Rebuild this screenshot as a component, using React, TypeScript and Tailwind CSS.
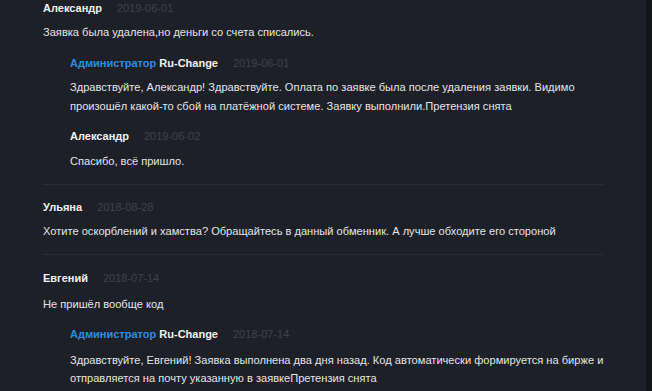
import React from "react";

type C = { name: string; admin?: boolean; date: string };

function Head({ c }: { c: C }) {
  return (
    <div className="flex items-center h-[16px] text-[11px] leading-[16px]">
      {c.admin ? (
        <span className="font-bold">
          <span className="text-[#2a8ee0]">Администратор</span>{" "}
          <span className="text-[#f2f2f2]">Ru-Change</span>
        </span>
      ) : (
        <span className="font-bold text-[#f2f2f2]">{c.name}</span>
      )}
      <span className="ml-[15px] text-[#3f424d]">{c.date}</span>
    </div>
  );
}

function Body({ lines, tight }: { lines: string[]; tight?: boolean }) {
  return (
    <div
      className={
        tight
          ? "text-[11.1px] leading-[18px] text-[#e4e4e6] whitespace-nowrap"
          : "text-[11.1px] leading-[19px] text-[#e4e4e6] whitespace-nowrap"
      }
    >
      {lines.map((l, i) => (
        <div key={i}>{l}</div>
      ))}
    </div>
  );
}

export default function App() {
  return (
    <div
      className="flex w-[652px] h-[391px] overflow-hidden bg-[#1e2028]"
      style={{ fontFamily: '"Liberation Sans", Arial, sans-serif' }}
    >
      <div className="w-[646px] pl-[43px] pr-[42px]">
        {/* Thread 1 */}
        <div className="pb-[13px] border-b border-[#2a2c35]">
          <Head c={{ name: "Александр", date: "2019-06-01" }} />
          <div className="mt-[7px]">
            <Body lines={["Заявка была удалена,но деньги со счета списались."]} />
          </div>
          <div className="pl-[27px] mt-[13px]">
            <Head c={{ name: "", admin: true, date: "2019-06-01" }} />
            <div className="mt-[7px]">
              <Body
                lines={[
                  "Здравствуйте, Александр! Здравствуйте. Оплата по заявке была после удаления заявки. Видимо",
                  "произошёл какой-то сбой на платёжной системе. Заявку выполнили.Претензия снята",
                ]}
              />
            </div>
            <div className="mt-[12px]">
              <Head c={{ name: "Александр", date: "2019-06-02" }} />
            </div>
            <div className="mt-[8px]">
              <Body lines={["Спасибо, всё пришло."]} />
            </div>
          </div>
        </div>
        {/* Thread 2 */}
        <div className="pt-[14px] pb-[13px] border-b border-[#2a2c35]">
          <Head c={{ name: "Ульяна", date: "2018-08-28" }} />
          <div className="mt-[7px]">
            <Body lines={["Хотите оскорблений и хамства? Обращайтесь в данный обменник. А лучше обходите его стороной"]} />
          </div>
        </div>
        {/* Thread 3 */}
        <div className="pt-[15px]">
          <Head c={{ name: "Евгений", date: "2018-07-14" }} />
          <div className="mt-[9px]">
            <Body lines={["Не пришёл вообще код"]} />
          </div>
          <div className="pl-[27px] mt-[12px]">
            <Head c={{ name: "", admin: true, date: "2018-07-14" }} />
            <div className="mt-[9px]">
              <Body
                tight
                lines={[
                  "Здравствуйте, Евгений! Заявка выполнена два дня назад. Код автоматически формируется на бирже и",
                  "отправляется на почту указанную в заявкеПретензия снята",
                ]}
              />
            </div>
          </div>
        </div>
      </div>
      <div className="flex-1 bg-[#131418]" />
    </div>
  );
}
